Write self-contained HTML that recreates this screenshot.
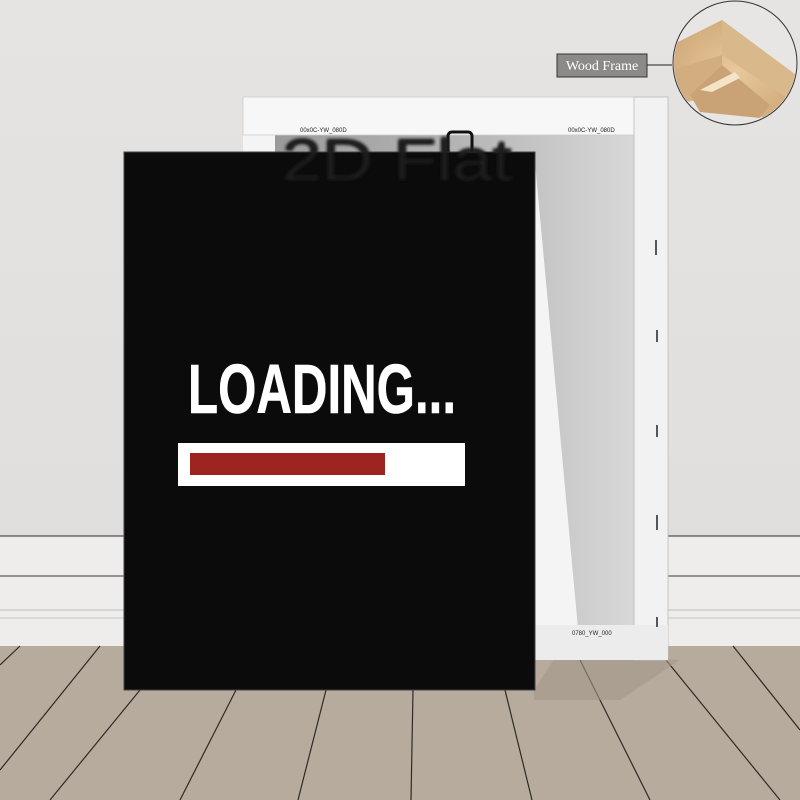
<!DOCTYPE html>
<html><head><meta charset="utf-8"><style>
html,body{margin:0;padding:0;width:800px;height:800px;overflow:hidden;background:#e3e1df}
svg{display:block}
</style></head><body>
<svg width="800" height="800" viewBox="0 0 800 800" xmlns="http://www.w3.org/2000/svg">
<defs>
<linearGradient id="wall" x1="0" y1="0" x2="0" y2="1">
<stop offset="0" stop-color="#e6e4e2"/><stop offset="1" stop-color="#dedcda"/></linearGradient>
<linearGradient id="inner" x1="0" y1="0" x2="1" y2="0">
<stop offset="0" stop-color="#9a9a9a"/><stop offset="0.5" stop-color="#b4b4b4"/><stop offset="1" stop-color="#d8d8d8"/></linearGradient>
<radialGradient id="wood" cx="0.5" cy="0.5" r="0.6">
<stop offset="0" stop-color="#e8c99c"/><stop offset="1" stop-color="#cfa878"/></radialGradient>
<filter id="bl"><feGaussianBlur stdDeviation="1.5"/></filter>
</defs>
<rect width="800" height="800" fill="url(#wall)"/>
<rect x="0" y="536" width="800" height="110" fill="#eeedeb"/>
<line x1="0" y1="536" x2="800" y2="536" stroke="#2a2a2a" stroke-width="1"/>
<line x1="0" y1="576" x2="800" y2="576" stroke="#3a3a3a" stroke-width="1"/>
<line x1="0" y1="610" x2="800" y2="610" stroke="#bdbbb9" stroke-width="1"/>
<line x1="0" y1="618" x2="800" y2="618" stroke="#c9c7c5" stroke-width="1"/>
<rect x="0" y="646" width="800" height="154" fill="#b6ab9d"/>
<g stroke="#2e2a26" stroke-width="1.2">
<line x1="20" y1="646" x2="0" y2="665"/>
<line x1="100" y1="646" x2="0" y2="770"/>
<line x1="140" y1="690" x2="50" y2="800"/>
<line x1="236" y1="690" x2="180" y2="800"/>
<line x1="326" y1="690" x2="298" y2="800"/>
<line x1="413" y1="690" x2="411" y2="800"/>
<line x1="505" y1="690" x2="532" y2="800"/>
<line x1="580" y1="660" x2="650" y2="800"/>
<line x1="666" y1="660" x2="780" y2="800"/>
<line x1="733" y1="646" x2="800" y2="730"/>
</g>
<polygon points="534,690 560,650 680,660 620,700 534,700" fill="#a39888" opacity="0.6"/>
<polygon points="243,97 666,97 668,660 534,660 534,152 243,152" fill="#f4f4f4"/>
<polygon points="275,135 634,135 634,650 580,650 534,152 275,152" fill="url(#inner)"/>
<rect x="243" y="97" width="425" height="38" fill="#f7f7f7" stroke="#ccc" stroke-width="0.8"/>
<rect x="634" y="97" width="34" height="563" fill="#f2f2f2" stroke="#bbb" stroke-width="0.8"/>
<rect x="534" y="625" width="134" height="35" fill="#ececec"/>
<text x="300" y="132" font-family="Liberation Sans, sans-serif" font-size="6" fill="#222">00x0C-YW_080D</text>
<text x="568" y="132" font-family="Liberation Sans, sans-serif" font-size="6" fill="#222">00x0C-YW_080D</text>
<text x="572" y="635" font-family="Liberation Sans, sans-serif" font-size="6" fill="#222">0780_YW_000</text>
<rect x="448" y="132" width="24" height="22" rx="4" fill="none" stroke="#111" stroke-width="3"/>
<g stroke="#222" stroke-width="1.5"><line x1="656" y1="240" x2="656" y2="255"/><line x1="657" y1="330" x2="657" y2="342"/><line x1="657" y1="425" x2="657" y2="437"/><line x1="657" y1="515" x2="657" y2="530"/><line x1="657" y1="617" x2="657" y2="627"/></g>
<text x="282" y="180" font-family="Liberation Sans, sans-serif" font-size="58" fill="#222" filter="url(#bl)" textLength="230" lengthAdjust="spacingAndGlyphs">2D Flat</text>
<rect x="124" y="152" width="411" height="538" fill="#0b0b0b" stroke="#444" stroke-width="1"/>
<text x="282" y="180" font-family="Liberation Sans, sans-serif" font-size="58" fill="#1c1c1c" filter="url(#bl)" textLength="230" lengthAdjust="spacingAndGlyphs">2D Flat</text>
<text x="188" y="413" font-family="Liberation Sans Narrow, Liberation Sans, sans-serif" font-weight="bold" font-size="70" fill="#fff" stroke="#fff" stroke-width="0.6" textLength="268" lengthAdjust="spacingAndGlyphs">LOADING...</text>
<rect x="178" y="443" width="287" height="43" fill="#fff"/>
<rect x="190" y="453" width="195" height="22" fill="#9e2420"/>
<rect x="557" y="54" width="90" height="23" fill="#8c8a88" stroke="#333" stroke-width="1"/>
<text x="602" y="70" text-anchor="middle" font-family="Liberation Serif, serif" font-size="14" fill="#fff">Wood Frame</text>
<line x1="647" y1="65" x2="672" y2="65" stroke="#222" stroke-width="1"/>
<circle cx="735" cy="63" r="62" fill="#e8e6e4" stroke="#333" stroke-width="1"/>
<clipPath id="cc"><circle cx="735" cy="63" r="61"/></clipPath>
<g clip-path="url(#cc)">
<polygon points="672,45 722,20 800,78 800,110 768,120 720,95 672,105" fill="url(#wood)"/>
<polygon points="722,20 800,78 790,100 722,55" fill="#d9b98c"/>
<polygon points="672,70 722,55 722,65 690,95 672,98" fill="#d2ad7f"/>
<polygon points="690,95 722,65 770,105 760,118 700,112" fill="#c9a375"/>
<polygon points="700,90 735,72 740,78 712,92" fill="#f3e4c8"/>
</g>
</svg>
</body></html>
